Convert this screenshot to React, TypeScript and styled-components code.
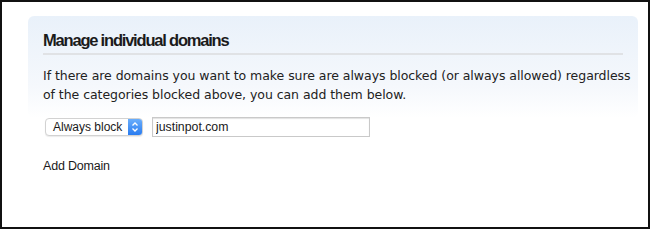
import React, { useState } from 'react';
import styled, { createGlobalStyle } from 'styled-components';

const GlobalStyle = createGlobalStyle`
  html, body {
    margin: 0;
    padding: 0;
    background: #fff;
  }
  * {
    box-sizing: border-box;
  }
`;

const Frame = styled.div`
  width: 650px;
  height: 229px;
  border: 2px solid #111;
  background: #fff;
  padding: 14px 10px 0 26px;
`;

const Panel = styled.section`
  border-radius: 6px;
  background: linear-gradient(to bottom, #e9f1fa 0px, #f5f8fc 70px, #ffffff 102px);
  padding: 14px 15px 0 15px;
  height: 102px;
`;

const Heading = styled.h2`
  margin: 0;
  font-family: 'Liberation Sans', Arial, sans-serif;
  font-weight: bold;
  font-size: 16.5px;
  line-height: 20px;
  letter-spacing: -1.2px;
  color: #1b1b1b;
  padding-bottom: 3px;
  border-bottom: 2px solid #e0e2e5;
`;

const Intro = styled.p`
  margin: 11px 0 0 0;
  font-family: 'DejaVu Sans', Verdana, sans-serif;
  font-size: 12.5px;
  line-height: 19px;
  letter-spacing: -0.05px;
  white-space: nowrap;
  color: #222;
`;

const FormRow = styled.div`
  display: flex;
  align-items: center;
  gap: 9px;
  padding-left: 17px;
  margin-top: -1px;
`;

const Popup = styled.div`
  display: flex;
  align-items: stretch;
  width: 98px;
  height: 18px;
  border: 1px solid #d2d2d2;
  border-radius: 4px;
  background: #fff;
  box-shadow: 0 1px 1px rgba(0, 0, 0, 0.08);
  overflow: hidden;
`;

const PopupLabel = styled.span`
  flex: 1;
  font-family: 'Liberation Sans', Arial, sans-serif;
  font-size: 12px;
  line-height: 16px;
  white-space: nowrap;
  color: #1a1a1a;
  padding-left: 7px;
`;

const Stepper = styled.span`
  width: 14px;
  display: flex;
  align-items: center;
  justify-content: center;
  background: linear-gradient(to bottom, #6aaefc, #2a7cf0);
`;

const DomainInput = styled.input`
  width: 218px;
  height: 20px;
  border: 1px solid #c9c9c9;
  box-shadow: inset 0 1px 1px rgba(0, 0, 0, 0.12);
  padding: 0 0 0 3px;
  font-family: 'Liberation Sans', Arial, sans-serif;
  font-size: 12.3px;
  color: #1a1a1a;
  outline: none;
`;

const AddLink = styled.div`
  margin: 21px 0 0 15px;
  font-family: 'Liberation Sans', Arial, sans-serif;
  font-size: 12.5px;
  letter-spacing: -0.2px;
  line-height: 16px;
  color: #1a1a1a;
`;

const App = () => {
  const [domain, setDomain] = useState<string>('justinpot.com');

  return (
    <>
      <GlobalStyle />
      <Frame>
        <Panel>
          <Heading>Manage individual domains</Heading>
          <Intro>
            If there are domains you want to make sure are always blocked (or always allowed) regardless
            <br />
            of the categories blocked above, you can add them below.
          </Intro>
        </Panel>
        <FormRow>
          <Popup>
            <PopupLabel>Always block</PopupLabel>
            <Stepper>
              <svg width="8" height="12" viewBox="0 0 8 12">
                <path d="M1.5 4.5 L4 2 L6.5 4.5 M1.5 7.5 L4 10 L6.5 7.5" fill="none" stroke="#fff" strokeWidth="1.3" />
              </svg>
            </Stepper>
          </Popup>
          <DomainInput value={domain} onChange={(e) => setDomain(e.target.value)} />
        </FormRow>
        <AddLink>Add Domain</AddLink>
      </Frame>
    </>
  );
};

export default App;
